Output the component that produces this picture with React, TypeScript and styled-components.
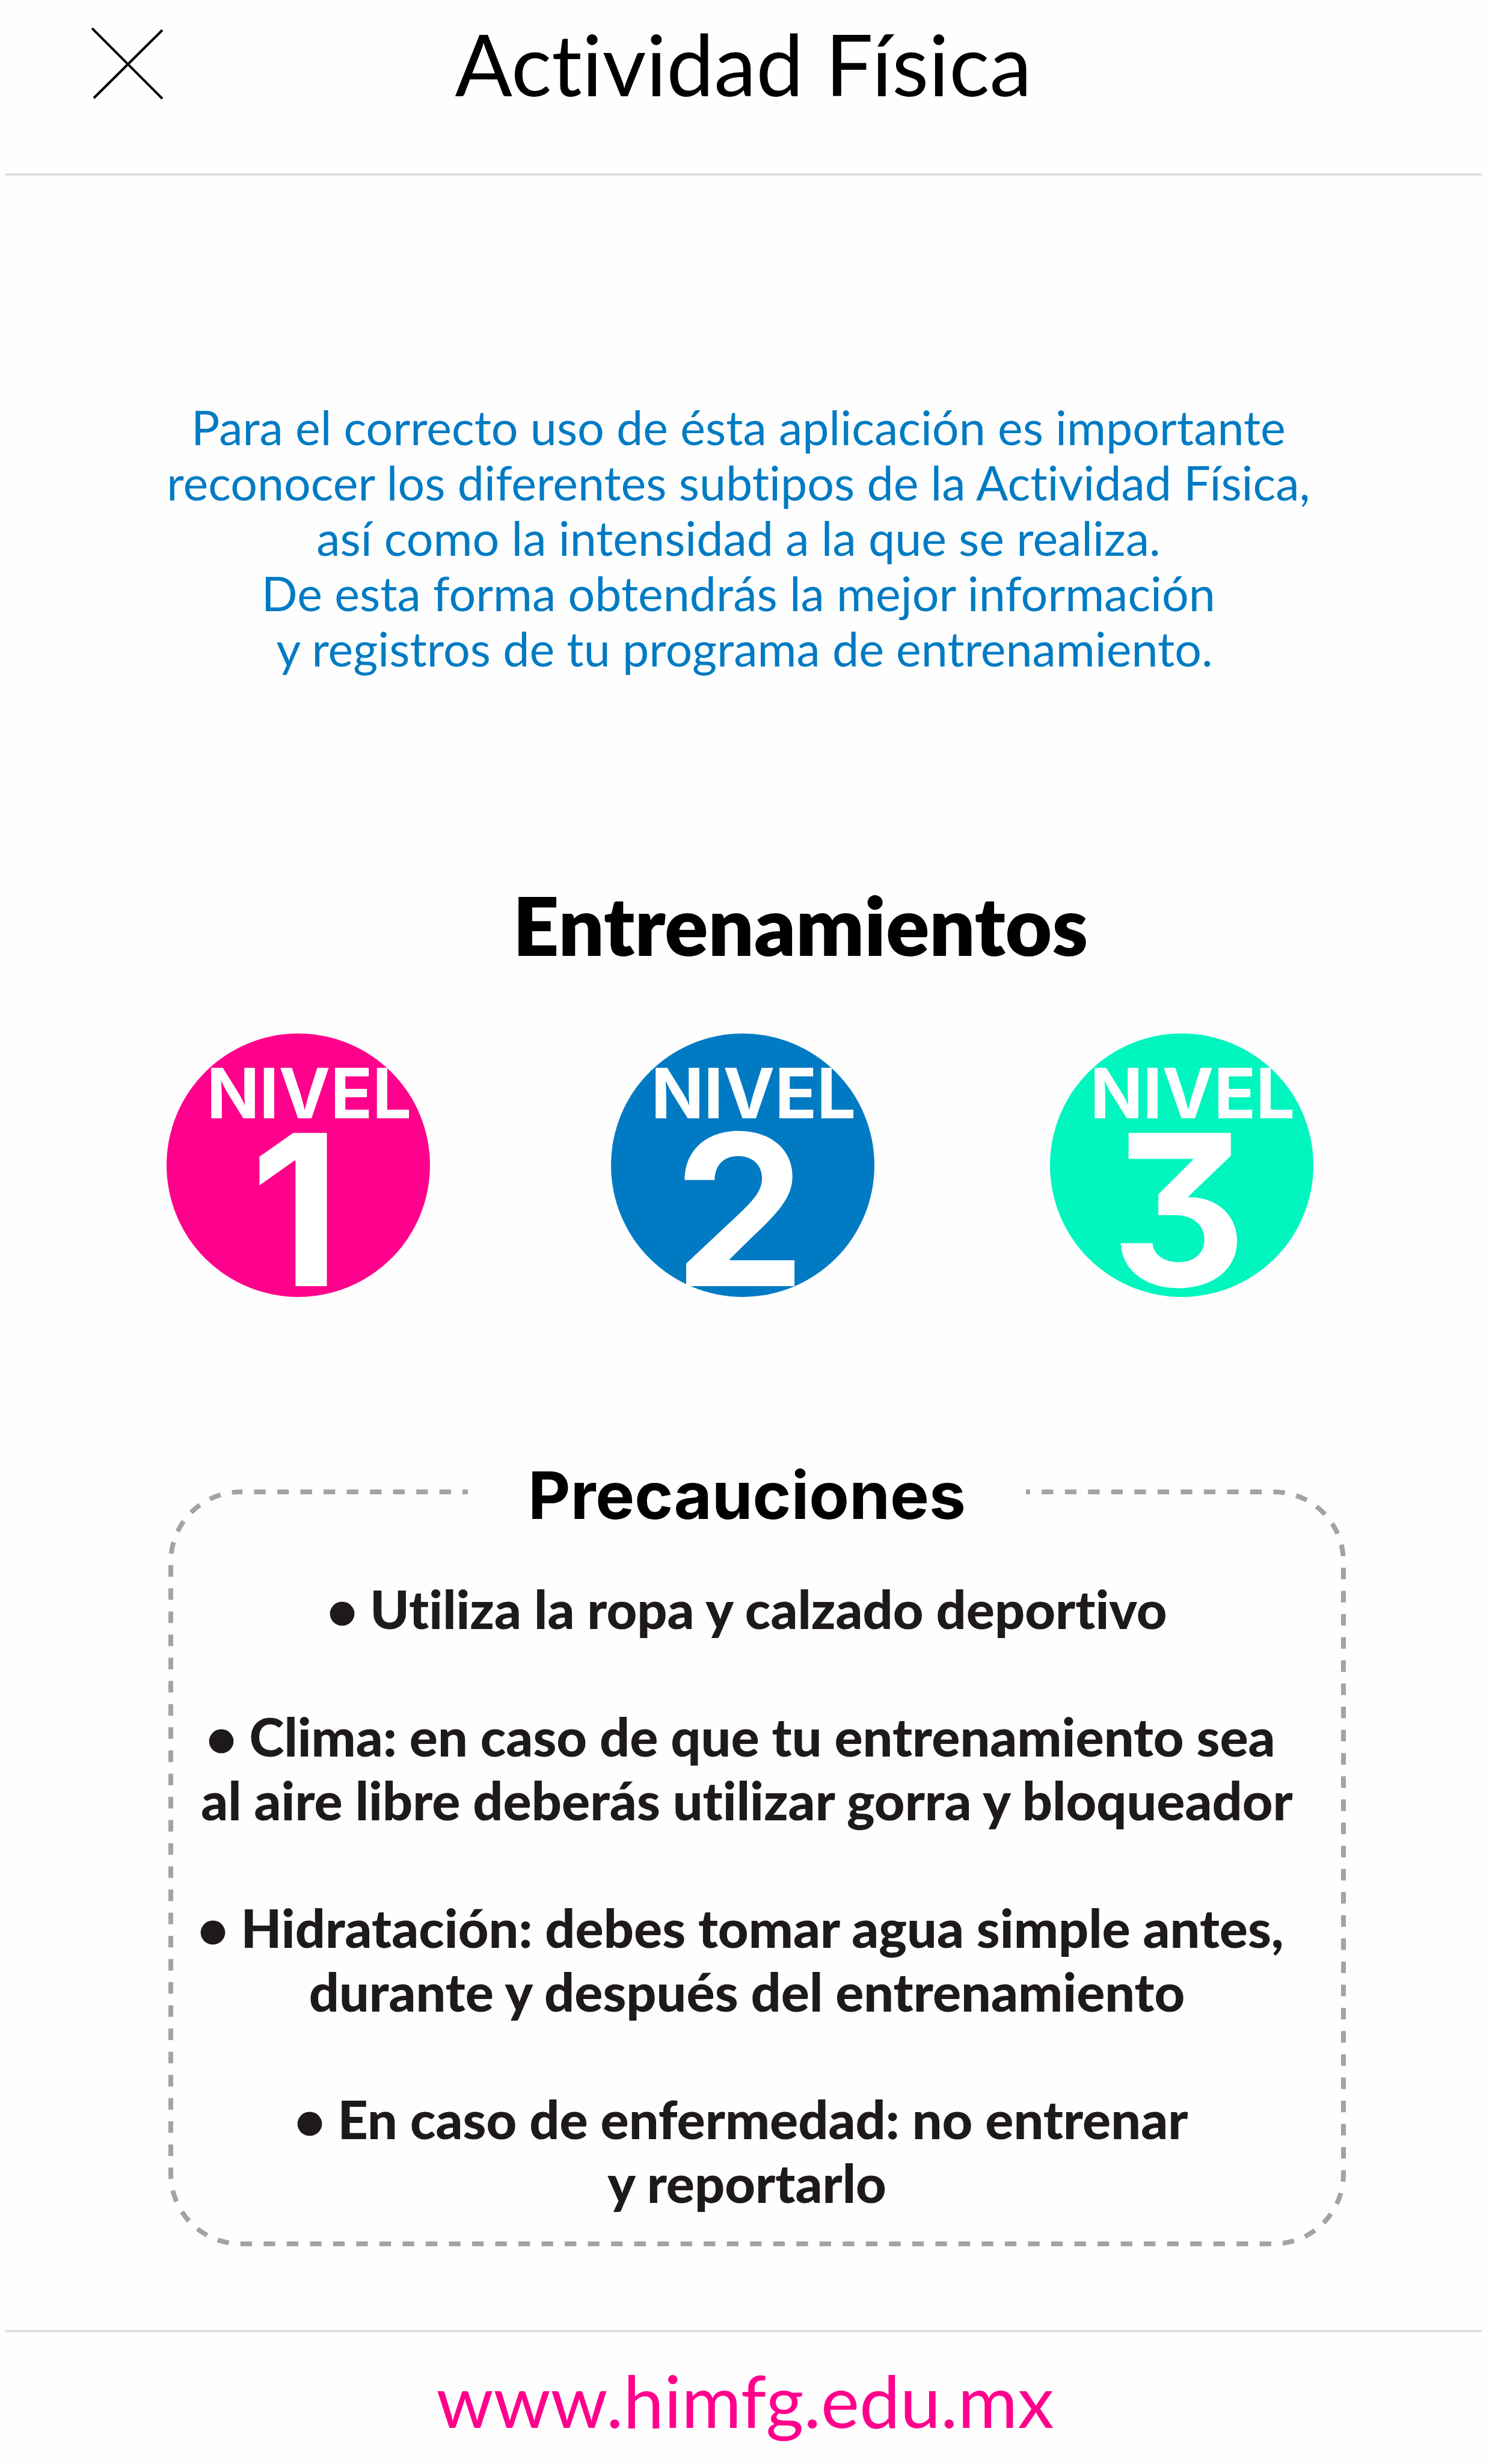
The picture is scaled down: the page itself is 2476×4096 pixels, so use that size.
import React from "react";
import styled, { createGlobalStyle } from "styled-components";

const colors = {
  ink: "#000000",
  body: "#1f1a1a",
  pink: "#ff008c",
  blue: "#007bc3",
  mint: "#00f5bf",
  rule: "#e0e0e0",
  dash: "#a3a3a3",
};

const GlobalStyle = createGlobalStyle`
  *, *::before, *::after {
    box-sizing: border-box;
  }
  body {
    margin: 0;
    background: #fefefe;
    font-family: Lato, "Open Sans", sans-serif;
    font-variant-ligatures: none;
  }
`;

const Page = styled.div`
  display: flex;
  flex-direction: column;
`;

const Header = styled.header`
  display: grid;
  grid-template-columns: 1fr auto 1fr;
  align-items: center;
  margin: 0 12px 0 8px;
  padding: 22px 0 98px;
  border-bottom: 4px solid ${colors.rule};
`;

const CloseButton = styled.button`
  justify-self: start;
  display: flex;
  margin: 0 0 0 144px;
  padding: 0;
  border: 0;
  background: none;
  color: ${colors.ink};
  cursor: pointer;
`;

const Title = styled.h1`
  margin: 0;
  font-size: 141px;
  font-weight: 400;
  line-height: 168px;
  color: ${colors.ink};
`;

const Main = styled.main`
  display: flex;
  flex-direction: column;
`;

const Intro = styled.p`
  margin: 372px 0 0;
  font-size: 79px;
  line-height: 92px;
  text-align: center;
  color: ${colors.blue};
`;

const Line = styled.span`
  display: block;
`;

const SectionTitle = styled.h2`
  margin: 334px 0 0;
  padding-left: 186px;
  font-size: 134px;
  font-weight: 800;
  line-height: 160px;
  text-align: center;
  color: ${colors.ink};
`;

const Levels = styled.div`
  display: grid;
  grid-template-columns: 739fr 730fr 438px;
  margin-top: 100px;
  padding: 0 292px 0 277px;
`;

const LevelButton = styled.button<{ $color: string }>`
  display: flex;
  flex-direction: column;
  align-items: center;
  gap: 24px;
  width: 438px;
  height: 438px;
  padding: 58px 0 0;
  border: 0;
  border-radius: 50%;
  background: ${(p) => p.$color};
  color: #ffffff;
  font-family: Inter, "Open Sans", sans-serif;
  font-weight: 700;
  cursor: pointer;
`;

const LevelLabel = styled.span`
  padding-left: 36px;
  font-size: 115px;
  line-height: 84px;
`;

const LevelNumber = styled.span`
  padding-right: 10px;
  font-size: 350px;
  line-height: 254px;
  font-feature-settings: "cv09";
`;

const Precautions = styled.section`
  position: relative;
  display: flex;
  flex-direction: column;
  align-items: center;
  margin: 263px 238px 0 280px;
  padding: 0 34px 53px 0;
`;

const Frame = styled.svg`
  position: absolute;
  top: 57px;
  left: 0;
  width: 100%;
  height: calc(100% - 57px);
  overflow: visible;

  rect {
    x: 4px;
    y: 4px;
    width: calc(100% - 8px);
    height: calc(100% - 8px);
  }
`;

const PrecautionsTitle = styled.h2`
  position: relative;
  margin: 0;
  padding: 0 100px;
  background: #fefefe;
  font-family: Inter, "Open Sans", sans-serif;
  font-size: 109px;
  font-weight: 700;
  line-height: 132px;
  color: ${colors.ink};
`;

const PrecautionList = styled.ul`
  position: relative;
  display: flex;
  flex-direction: column;
  gap: 106px;
  margin: 70px 0 0;
  padding: 0;
  list-style: none;
  font-size: 88px;
  font-weight: 900;
  line-height: 106px;
  text-align: center;
  white-space: nowrap;
  color: ${colors.body};
`;

const Footer = styled.footer`
  display: flex;
  justify-content: center;
  margin: 139px 12px 0 8px;
  padding: 41px 0 34px;
  border-top: 4px solid ${colors.rule};
`;

const SiteLink = styled.a`
  padding-left: 6px;
  font-size: 121px;
  line-height: 144px;
  color: ${colors.pink};
  text-decoration: none;
`;

const intro = [
  "Para el correcto uso de ésta aplicación es importante\u00a0",
  "reconocer los diferentes subtipos de la Actividad Física,\u00a0",
  "así como la intensidad a la que se realiza.\u00a0",
  "De esta forma obtendrás la mejor información\u00a0",
  "y registros de tu programa de entrenamiento.",
];

const levels = [
  { number: 1, color: colors.pink },
  { number: 2, color: colors.blue },
  { number: 3, color: colors.mint },
];

const precautions = [
  ["• Utiliza la ropa y calzado deportivo"],
  [
    "• Clima: en caso de que tu entrenamiento sea\u00a0",
    "al aire libre deberás utilizar gorra y bloqueador",
  ],
  [
    "• Hidratación: debes tomar agua simple antes,\u00a0",
    "durante y después del entrenamiento",
  ],
  ["• En caso de enfermedad: no entrenar\u00a0", "y reportarlo"],
];

export default function App() {
  return (
    <Page>
      <GlobalStyle />
      <Header>
        <CloseButton type="button" aria-label="Cerrar">
          <svg width="120" height="120" viewBox="0 0 120 120" stroke="currentColor" strokeWidth="4" fill="none">
            <path d="M1 1L118 118M118 4L4 117" />
          </svg>
        </CloseButton>
        <Title>Actividad Física</Title>
      </Header>
      <Main>
        <Intro>
          {intro.map((text) => (
            <Line key={text}>{text}</Line>
          ))}
        </Intro>
        <SectionTitle>Entrenamientos</SectionTitle>
        <Levels>
          {levels.map(({ number, color }) => (
            <LevelButton key={number} type="button" $color={color}>
              <LevelLabel>NIVEL</LevelLabel>
              <LevelNumber>{number}</LevelNumber>
            </LevelButton>
          ))}
        </Levels>
        <Precautions>
          <Frame aria-hidden="true">
            <rect
              rx="116"
              fill="none"
              stroke={colors.dash}
              strokeWidth="8"
              strokeDasharray="19.26 19.26"
              strokeDashoffset="16"
            />
          </Frame>
          <PrecautionsTitle>Precauciones</PrecautionsTitle>
          <PrecautionList>
            {precautions.map((lines) => (
              <li key={lines[0]}>
                {lines.map((text) => (
                  <Line key={text}>{text}</Line>
                ))}
              </li>
            ))}
          </PrecautionList>
        </Precautions>
      </Main>
      <Footer>
        <SiteLink href="http://www.himfg.edu.mx">www.himfg.edu.mx</SiteLink>
      </Footer>
    </Page>
  );
}
